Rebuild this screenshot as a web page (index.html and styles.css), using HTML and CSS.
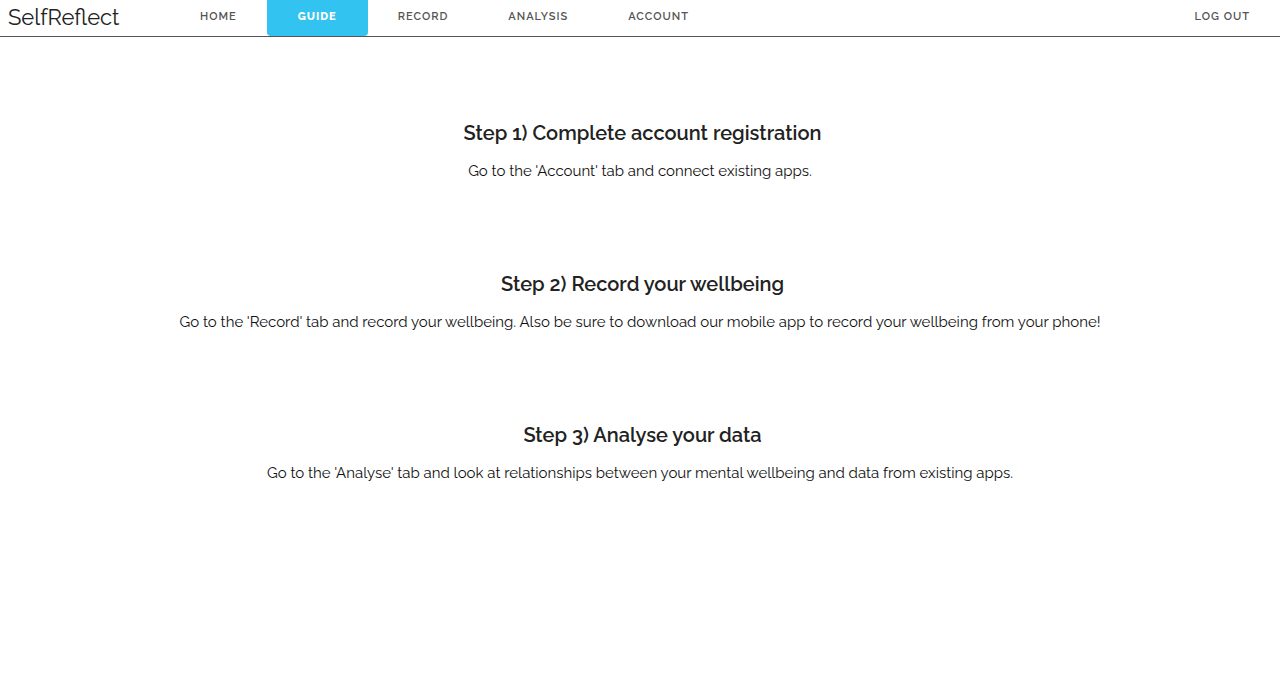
FILE: index.html
```html
<!DOCTYPE html>
<html lang="en">
<head>
<meta charset="utf-8">
<meta name="viewport" content="width=device-width, initial-scale=1">
<title>SelfReflect – Guide</title>
<link rel="stylesheet" href="styles.css">
</head>
<body>
<header class="navbar">
  <a class="brand" href="#">SelfReflect</a>
  <nav class="tabs">
    <a class="tab" href="#">Home</a>
    <a class="tab tab-active" href="#" aria-current="page">Guide</a>
    <a class="tab" href="#">Record</a>
    <a class="tab" href="#">Analysis</a>
    <a class="tab" href="#">Account</a>
  </nav>
  <a class="tab logout" href="#">Log out</a>
</header>
<main class="guide">
  <section class="step">
    <h2 class="step-title">Step 1) Complete account registration</h2>
    <p class="step-text">Go to the 'Account' tab and connect existing apps.</p>
  </section>
  <section class="step">
    <h2 class="step-title">Step 2) Record your wellbeing</h2>
    <p class="step-text">Go to the 'Record' tab and record your wellbeing. Also be sure to download our mobile app to record your wellbeing from your phone!</p>
  </section>
  <section class="step">
    <h2 class="step-title">Step 3) Analyse your data</h2>
    <p class="step-text">Go to the 'Analyse' tab and look at relationships between your mental wellbeing and data from existing apps.</p>
  </section>
</main>
</body>
</html>
```
FILE: styles.css
```css
* { box-sizing: border-box; }
body {
  margin: 0;
  background: #fff;
  color: #222;
  font-family: Raleway, Lato, "Open Sans", sans-serif;
}
.navbar {
  display: flex;
  align-items: flex-start;
  border-bottom: 1px solid #555;
}
.brand {
  width: 170px;
  padding-left: 8px;
  color: #222;
  font-size: 22px;
  line-height: 34px;
  text-decoration: none;
}
.tabs { display: flex; }
.tab {
  height: 36px;
  padding: 0 30px;
  border-radius: 0 0 4px 4px;
  color: #555;
  font-size: 11px;
  font-weight: 600;
  line-height: 34px;
  letter-spacing: 1px;
  text-transform: uppercase;
  text-decoration: none;
}
.tab-active {
  padding: 0 31px;
  background: #33c3f0;
  color: #fff;
  font-weight: 800;
}
.logout { margin-left: auto; }
.guide {
  display: flex;
  flex-direction: column;
  gap: 86px;
  padding: 81px 16px;
  text-align: center;
}
.step-title {
  margin: 0 0 11px;
  padding-left: 5px;
  font-size: 20px;
  font-weight: 600;
  line-height: 30px;
}
.step-text {
  margin: 0;
  color: #111;
  font-size: 15px;
  line-height: 24px;
}
```
